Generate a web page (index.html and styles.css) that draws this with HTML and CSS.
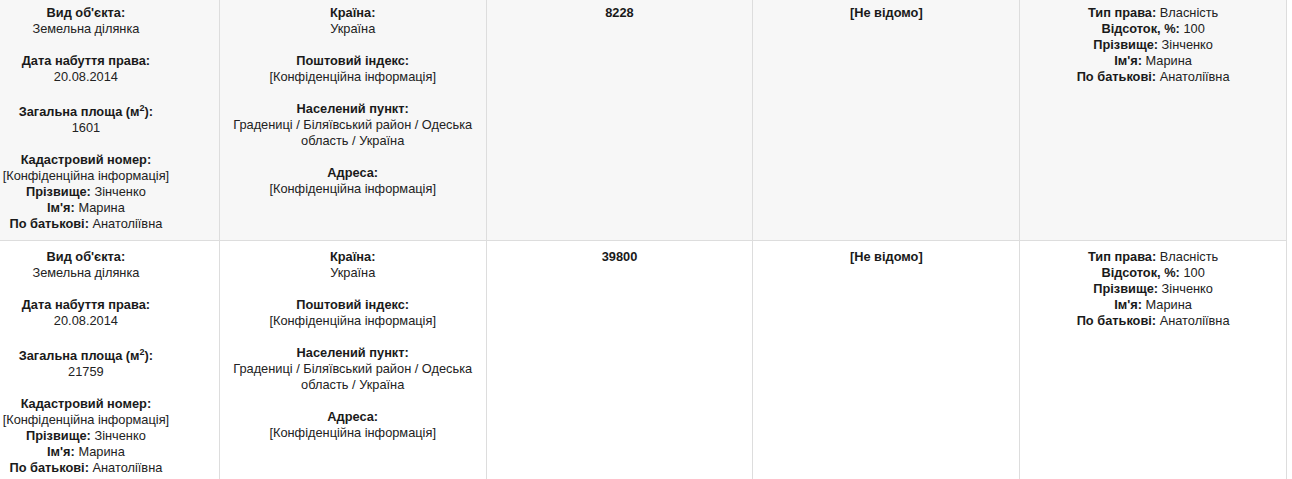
FILE: index.html
```html
<!DOCTYPE html>
<html lang="uk">
<head>
<meta charset="utf-8">
<title>Об'єкти</title>
<link rel="stylesheet" href="styles.css">
</head>
<body>
<table class="grid">
  <colgroup>
    <col class="c"><col class="c"><col class="c"><col class="c"><col class="c">
  </colgroup>
  <tbody>
    <tr class="row alt">
      <td>
        <div class="blk"><b>Вид об'єкта:</b><br>Земельна ділянка</div>
        <div class="blk"><b>Дата набуття права:</b><br>20.08.2014</div>
        <div class="blk"><b>Загальна площа (м<sup>2</sup>):</b><br>1601</div>
        <div><b>Кадастровий номер:</b><br>[Конфіденційна інформація]<br><b>Прізвище:</b> Зінченко<br><b>Ім'я:</b> Марина<br><b>По батькові:</b> Анатоліївна</div>
      </td>
      <td>
        <div class="blk"><b>Країна:</b><br>Україна</div>
        <div class="blk"><b>Поштовий індекс:</b><br>[Конфіденційна інформація]</div>
        <div class="blk"><b>Населений пункт:</b><br>Градениці / Біляївський район / Одеська область / Україна</div>
        <div><b>Адреса:</b><br>[Конфіденційна інформація]</div>
      </td>
      <td><b>8228</b></td>
      <td><b>[Не відомо]</b></td>
      <td>
        <div><b>Тип права:</b> Власність<br><b>Відсоток, %:</b> 100<br><b>Прізвище:</b> Зінченко<br><b>Ім'я:</b> Марина<br><b>По батькові:</b> Анатоліївна</div>
      </td>
    </tr>
    <tr class="row">
      <td>
        <div class="blk"><b>Вид об'єкта:</b><br>Земельна ділянка</div>
        <div class="blk"><b>Дата набуття права:</b><br>20.08.2014</div>
        <div class="blk"><b>Загальна площа (м<sup>2</sup>):</b><br>21759</div>
        <div><b>Кадастровий номер:</b><br>[Конфіденційна інформація]<br><b>Прізвище:</b> Зінченко<br><b>Ім'я:</b> Марина<br><b>По батькові:</b> Анатоліївна</div>
      </td>
      <td>
        <div class="blk"><b>Країна:</b><br>Україна</div>
        <div class="blk"><b>Поштовий індекс:</b><br>[Конфіденційна інформація]</div>
        <div class="blk"><b>Населений пункт:</b><br>Градениці / Біляївський район / Одеська область / Україна</div>
        <div><b>Адреса:</b><br>[Конфіденційна інформація]</div>
      </td>
      <td><b>39800</b></td>
      <td><b>[Не відомо]</b></td>
      <td>
        <div><b>Тип права:</b> Власність<br><b>Відсоток, %:</b> 100<br><b>Прізвище:</b> Зінченко<br><b>Ім'я:</b> Марина<br><b>По батькові:</b> Анатоліївна</div>
      </td>
    </tr>
  </tbody>
</table>
</body>
</html>
```
FILE: styles.css
```css
html, body {
  margin: 0;
  padding: 0;
  background: #ffffff;
}
body {
  font-family: "Liberation Sans", Arial, sans-serif;
  font-size: 12.8px;
  line-height: 16px;
  color: #222222;
  overflow: hidden;
}
.grid {
  border-collapse: collapse;
  table-layout: fixed;
  width: 1335px;
  margin-left: -48px;
  margin-top: -4px;
}
.grid td {
  border: 1px solid #dddddd;
  padding: 8px;
  vertical-align: top;
  text-align: center;
}
.row.alt td {
  background: #f7f7f7;
}
.blk {
  margin-bottom: 16px;
}
b {
  font-weight: bold;
  color: #1a1a1a;
}
sup {
  font-size: 9px;
  line-height: 14px;
  vertical-align: 5px;
}
```
